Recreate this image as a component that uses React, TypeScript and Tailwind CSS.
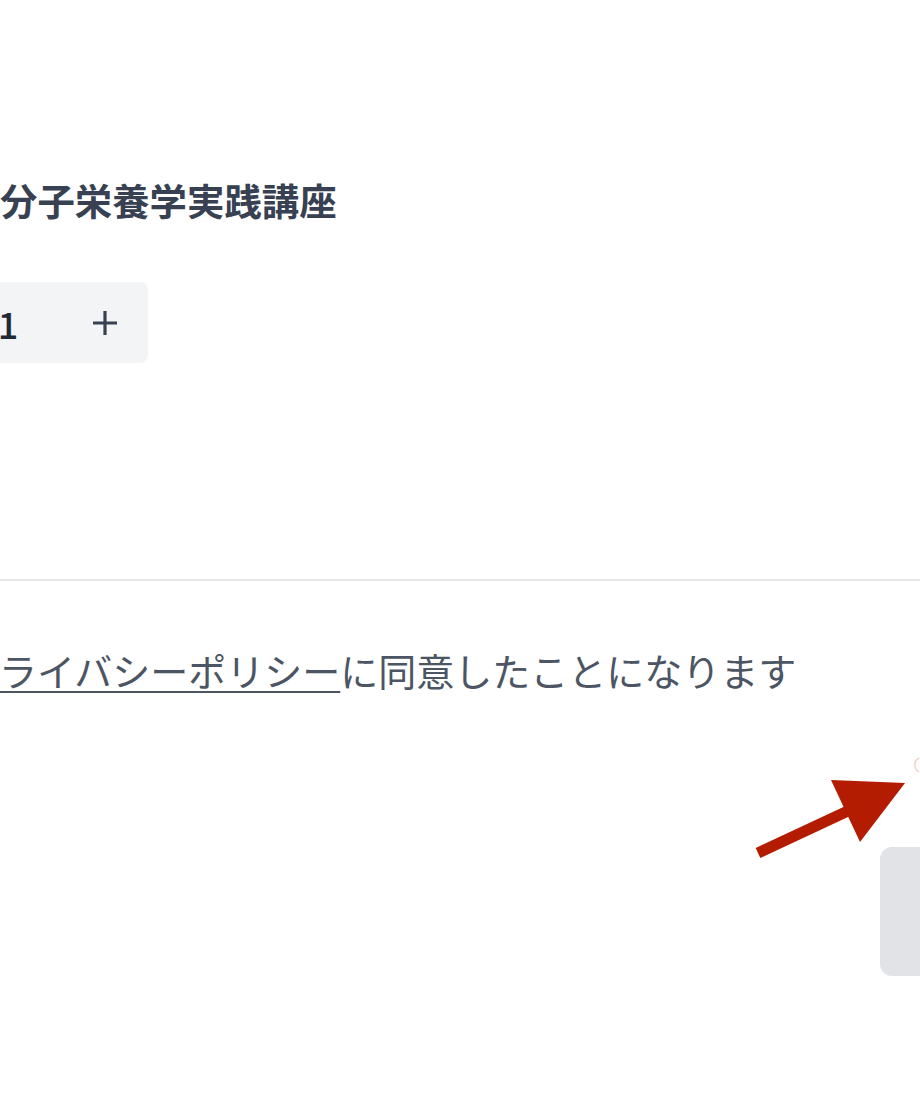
import React from "react";

const font = { fontFamily: '"Noto Sans CJK JP", "Noto Sans", sans-serif' };

function Stepper() {
  return (
    <div className="ml-[-136px] flex h-[81px] w-[284px] items-center rounded-lg bg-[#f3f4f6] text-[36px] text-[#1f2937]">
      <span className="flex w-[96px] justify-center">−</span>
      <span className="flex w-[96px] justify-center font-medium leading-none">1</span>
      <span className="flex w-[92px] justify-center pl-[6px]">
        <svg width="26" height="26" viewBox="0 0 26 26" fill="none" stroke="#374151" strokeWidth="3.2">
          <path d="M13 1 V25 M1 13 H25" />
        </svg>
      </span>
    </div>
  );
}

export default function App() {
  return (
    <div style={font} className="relative h-[1104px] w-[920px] overflow-hidden bg-white">
      <div className="pt-[172px]">
        <h2 className="text-[37.4px] font-bold leading-[56px] text-[#374151]">分子栄養学実践講座</h2>
        <div className="mt-[54px]">
          <Stepper />
        </div>
      </div>

      <div className="mt-[216px] border-t-2 border-[#e5e7eb]" />

      <p className="ml-[-39px] mt-[61px] text-[38px] leading-[56px] text-[#4b5563]">
        <span className="underline decoration-2 underline-offset-[5px]">プライバシーポリシー</span>
        に同意したことになります
      </p>

      <div className="mt-[149px] flex justify-end">
        <button className="mr-[-40px] h-[129px] w-[80px] rounded-xl bg-[#e2e3e7]" />
      </div>

      {/* annotation arrow */}
      <svg className="absolute left-[740px] top-[740px]" width="180" height="130" viewBox="0 0 180 130">
        <path d="M18 113 L110 70" stroke="#b31c00" strokeWidth="11" strokeLinecap="butt" />
        <polygon points="91,40 165,43 120,102" fill="#b31c00" />
        <path d="M179 18 A8 8 0 0 0 179 32" stroke="#f1d0cb" strokeWidth="1.5" fill="none" />
      </svg>
    </div>
  );
}
